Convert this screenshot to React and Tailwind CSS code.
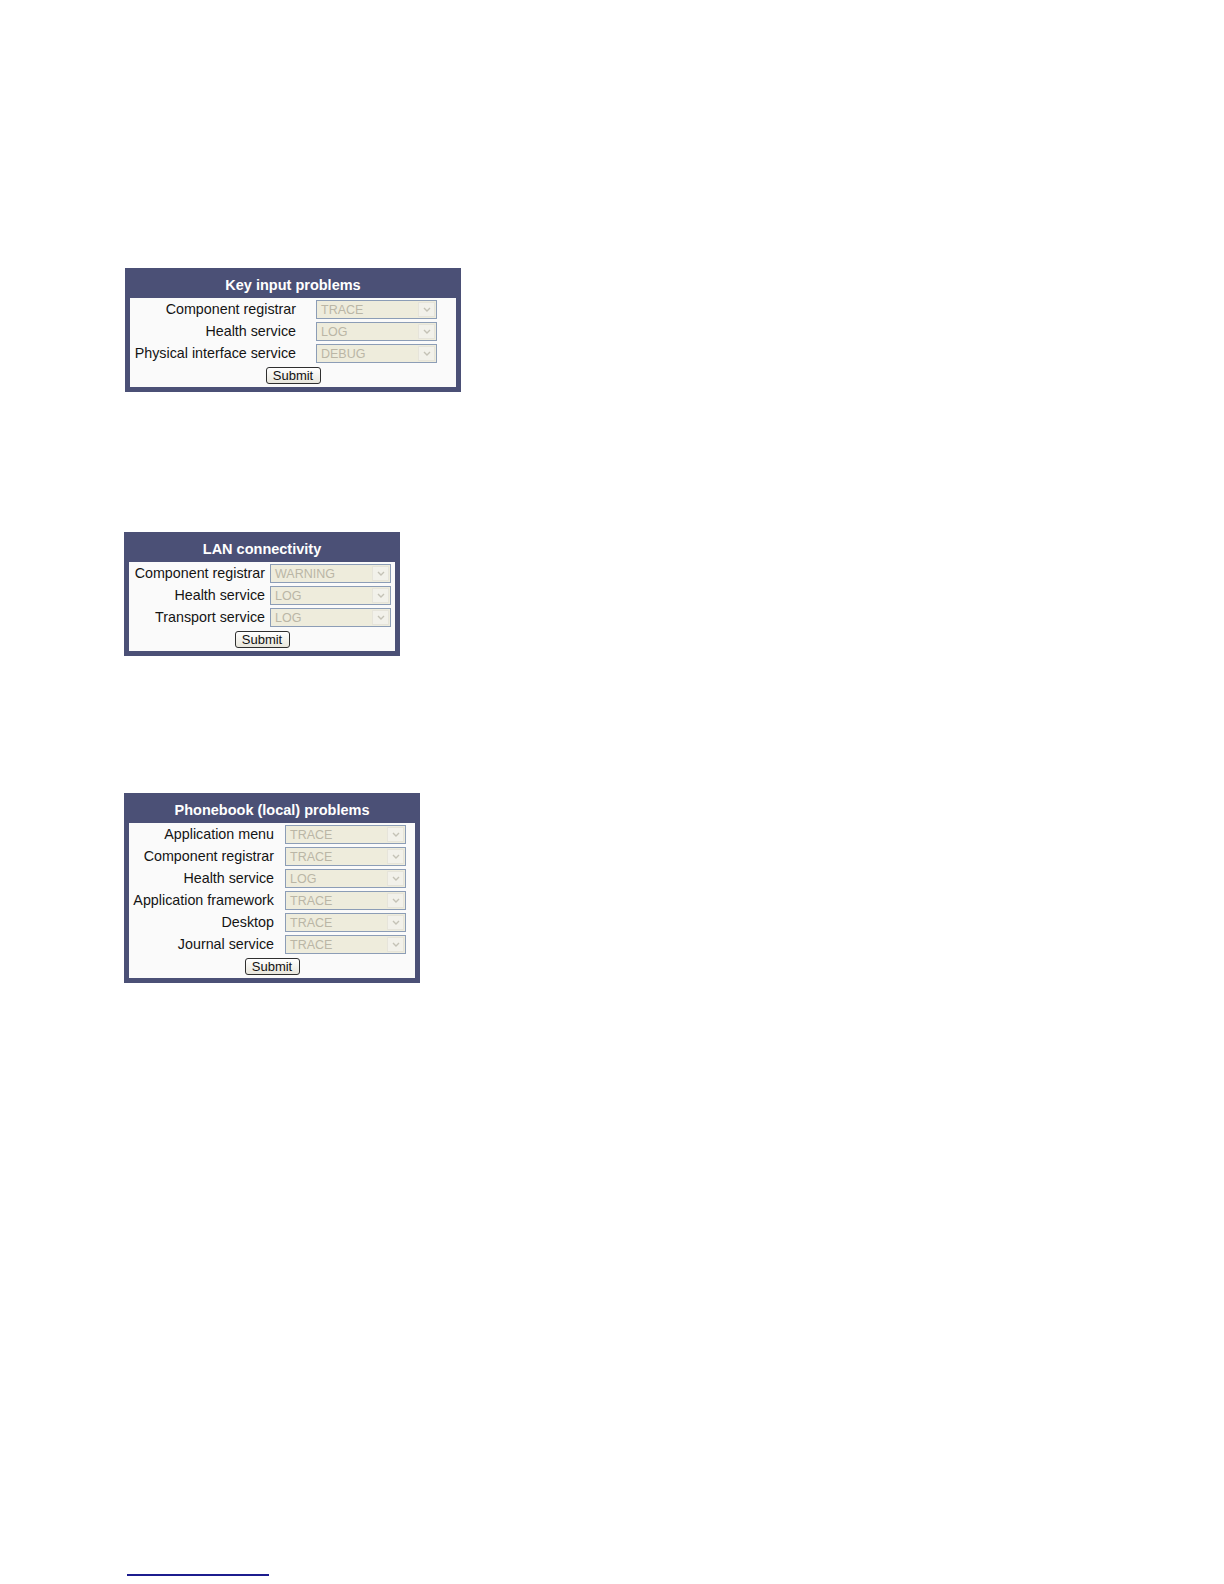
import React from "react";

function Select({ value }) {
  return (
    <div className="w-[121px] h-[19px] border border-[#8c9db6] bg-[#eeecdc] flex items-stretch shrink-0">
      <div className="flex-1 flex items-center pl-[4px] pt-[2px] text-[12.5px] leading-none text-[#bab6a6]">{value}</div>
      <div className="w-[17px] m-[1px] bg-[#f2f1ea] border border-[#e6e4da] flex items-center justify-center">
        <svg width="8" height="5" viewBox="0 0 8 5">
          <path d="M1 1 L4 4 L7 1" fill="none" stroke="#c4c2b6" strokeWidth="1.4" />
        </svg>
      </div>
    </div>
  );
}

function Panel({ title, rows, widthClass, labelClass, gapClass }) {
  return (
    <div className={`flex flex-col bg-[#4b5076] px-[5px] pt-[5px] pb-[5px] ${widthClass}`}>
      <div className="h-[25px] flex items-center justify-center text-white font-bold text-[14.5px] leading-none">
        {title}
      </div>
      <div className="bg-[#fafafa] flex flex-col pb-[1px]">
        {rows.map(([label, value]) => (
          <div key={label} className="h-[22px] flex items-center">
            <div className={`${labelClass} text-right pt-[1px] text-[14.3px] leading-none text-[#141414] whitespace-nowrap`}>
              {label}
            </div>
            <div className={gapClass} />
            <Select value={value} />
          </div>
        ))}
        <div className="h-[22px] flex items-center justify-center">
          <div className="w-[55px] h-[17px] border border-[#2f2f2f] rounded-[3px] bg-gradient-to-b from-[#ffffff] to-[#e8e6dc] flex items-center justify-center text-[13px] leading-none text-[#111]">
            Submit
          </div>
        </div>
      </div>
    </div>
  );
}

export default function App() {
  return (
    <div className="w-[1224px] h-[1584px] bg-white font-['Liberation_Sans',Arial,sans-serif] flex flex-col">
      <div className="mt-[268px] ml-[125px]">
        <Panel
          title="Key input problems"
          widthClass="w-[336px]"
          labelClass="w-[166px]"
          gapClass="w-[20px]"
          rows={[
            ["Component registrar", "TRACE"],
            ["Health service", "LOG"],
            ["Physical interface service", "DEBUG"],
          ]}
        />
      </div>
      <div className="mt-[140px] ml-[124px]">
        <Panel
          title="LAN connectivity"
          widthClass="w-[276px]"
          labelClass="w-[136px]"
          gapClass="w-[5px]"
          rows={[
            ["Component registrar", "WARNING"],
            ["Health service", "LOG"],
            ["Transport service", "LOG"],
          ]}
        />
      </div>
      <div className="mt-[137px] ml-[124px]">
        <Panel
          title="Phonebook (local) problems"
          widthClass="w-[296px]"
          labelClass="w-[145px]"
          gapClass="w-[11px]"
          rows={[
            ["Application menu", "TRACE"],
            ["Component registrar", "TRACE"],
            ["Health service", "LOG"],
            ["Application framework", "TRACE"],
            ["Desktop", "TRACE"],
            ["Journal service", "TRACE"],
          ]}
        />
      </div>
      <div className="mt-[591px] ml-[127px] w-[142px] h-[2px] bg-[#1c1c8e]" />
    </div>
  );
}
